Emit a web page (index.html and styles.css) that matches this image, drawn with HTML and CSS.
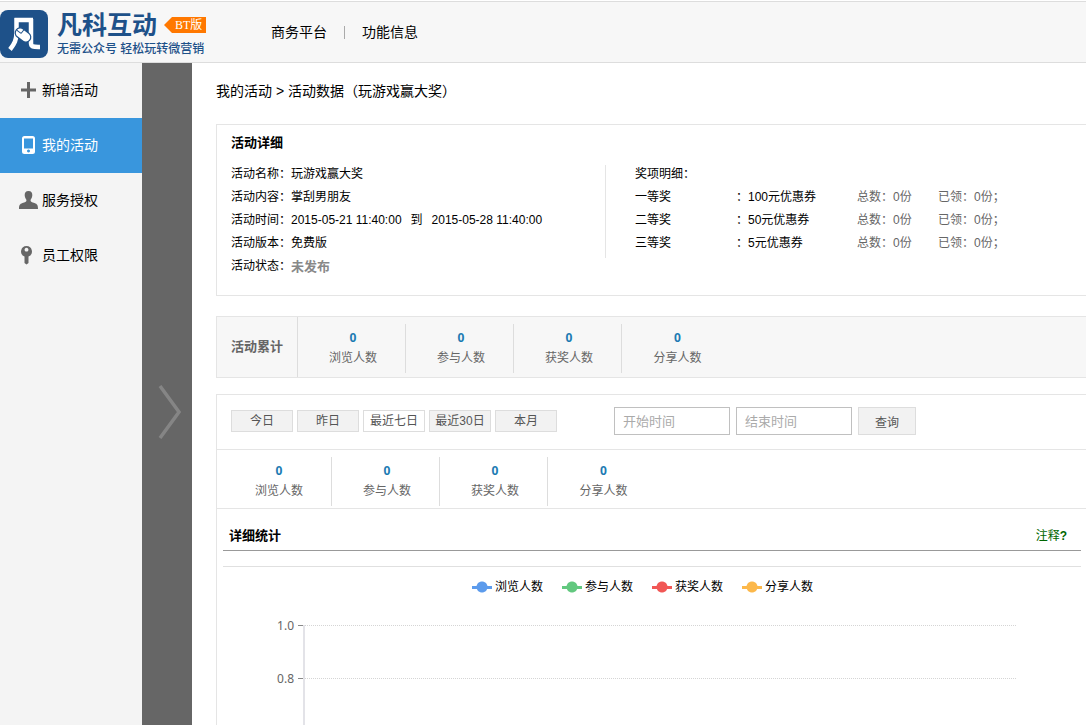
FILE: index.html
```html
<!DOCTYPE html>
<html lang="zh-CN">
<head>
<meta charset="utf-8">
<title>凡科互动 - 活动数据</title>
<link rel="stylesheet" href="styles.css">
</head>
<body>
<header class="topbar">
  <a class="brand" href="#">
    <svg class="brand-mark" viewBox="0 0 48 48" aria-hidden="true">
      <rect width="48" height="48" rx="8" fill="#1e5189"/>
      <path d="M16.500 8 V22 C16.500 30 14.500 34 10 39.500 M14.500 10 H33 M31 9 V33 C31 36.500 32.500 37.200 40 37" fill="none" stroke="#fff" stroke-width="4.500"/>
      <g transform="rotate(38 23 25)">
        <rect x="14.500" y="20" width="17" height="10" rx="5" fill="#fff" stroke="#1e5189" stroke-width="1.200"/>
        <path d="M20.500 20 V25 M15 25 H20.500" fill="none" stroke="#1e5189" stroke-width="1"/>
      </g>
    </svg>
    <span class="brand-text">
      <span class="brand-line"><strong class="brand-name">凡科互动</strong><span class="brand-tag">BT版</span></span>
      <span class="brand-slogan">无需公众号 轻松玩转微营销</span>
    </span>
  </a>
  <nav class="topnav">
    <a href="#">商务平台</a>
    <span class="topnav-sep"></span>
    <a href="#">功能信息</a>
  </nav>
</header>

<div class="shell">
  <nav class="sidebar">
    <a class="side-item" href="#">
      <svg class="side-icon" viewBox="0 0 20 20" aria-hidden="true"><path d="M2 10 H17 M9.500 2 V18" stroke="#666" stroke-width="3" fill="none"/></svg>新增活动</a>
    <a class="side-item is-active" href="#" aria-current="page">
      <svg class="side-icon" viewBox="0 0 20 20" aria-hidden="true"><path fill="#fff" fill-rule="evenodd" d="M5.500 1 H13.500 Q16 1 16 3.500 V16.500 Q16 19 13.500 19 H5.500 Q3 19 3 16.500 V3.500 Q3 1 5.500 1 Z M5 3.500 V13.500 H14 V3.500 Z M9.500 14.500 a1.500 1.500 0 1 0 .01 0 Z"/></svg>我的活动</a>
    <a class="side-item" href="#">
      <svg class="side-icon" viewBox="0 0 20 20" aria-hidden="true"><path fill="#666" d="M9.500 1 C12.300 1 13.500 3 13.300 5.500 C13.100 8 12 9 11.500 10 C11.500 12 13 12.300 15.500 13 C18.300 14 19 15.500 19 19 H0 C0 15.500 .7 14 3.500 13 C6 12.300 7.500 12 7.500 10 C7 9 5.900 8 5.700 5.500 C5.500 3 6.700 1 9.500 1 Z"/></svg>服务授权</a>
    <a class="side-item" href="#">
      <svg class="side-icon" viewBox="0 0 20 20" aria-hidden="true"><path fill="#666" fill-rule="evenodd" d="M7.500 1 a5.500 5.500 0 0 1 2 10.600 V18 L7.500 19.500 L5.500 18 V11.600 A5.500 5.500 0 0 1 7.500 1 Z M7.500 2.800 a1.900 1.900 0 1 0 .01 0 Z"/></svg>员工权限</a>
  </nav>
  <button class="expander" type="button" aria-label="展开">
    <svg class="expander-icon" viewBox="0 0 24 54" aria-hidden="true"><path d="M2 1 L21 27 L2 53" fill="none" stroke="#858585" stroke-width="3.500"/></svg>
  </button>

  <main class="main">
    <div class="crumb"><a href="#">我的活动</a> &gt; 活动数据（玩游戏赢大奖）</div>

    <section class="detail">
      <h2 class="detail-title">活动详细</h2>
      <div class="detail-cols">
        <dl class="facts">
          <div class="fact"><dt>活动名称：</dt><dd>玩游戏赢大奖</dd></div>
          <div class="fact"><dt>活动内容：</dt><dd>掌刮男朋友</dd></div>
          <div class="fact"><dt>活动时间：</dt><dd class="period"><time>2015-05-21 11:40:00</time><span>到</span><time>2015-05-28 11:40:00</time></dd></div>
          <div class="fact"><dt>活动版本：</dt><dd>免费版</dd></div>
          <div class="fact"><dt>活动状态：</dt><dd class="unpublished">未发布</dd></div>
        </dl>
        <div class="prize-col">
          <table class="prizes">
            <caption>奖项明细：</caption>
            <tbody>
              <tr><th scope="row">一等奖</th><td class="prize">：100元优惠券</td><td class="total">总数：0份</td><td class="taken">已领：0份；</td></tr>
              <tr><th scope="row">二等奖</th><td class="prize">：50元优惠券</td><td class="total">总数：0份</td><td class="taken">已领：0份；</td></tr>
              <tr><th scope="row">三等奖</th><td class="prize">：5元优惠券</td><td class="total">总数：0份</td><td class="taken">已领：0份；</td></tr>
            </tbody>
          </table>
        </div>
      </div>
    </section>

    <section class="totals">
      <h2 class="totals-title">活动累计</h2>
      <ul class="stats">
        <li class="stat"><b>0</b>浏览人数</li>
        <li class="stat"><b>0</b>参与人数</li>
        <li class="stat"><b>0</b>获奖人数</li>
        <li class="stat"><b>0</b>分享人数</li>
      </ul>
    </section>

    <section class="report">
      <form class="filter">
        <div class="ranges">
          <button class="range" type="button">今日</button>
          <button class="range" type="button">昨日</button>
          <button class="range is-on" type="button">最近七日</button>
          <button class="range" type="button">最近30日</button>
          <button class="range" type="button">本月</button>
        </div>
        <div class="dates">
          <input class="date" type="text" placeholder="开始时间" aria-label="开始时间">
          <input class="date" type="text" placeholder="结束时间" aria-label="结束时间">
          <button class="query" type="button">查询</button>
        </div>
      </form>
      <ul class="stats stats-range">
        <li class="stat"><b>0</b>浏览人数</li>
        <li class="stat"><b>0</b>参与人数</li>
        <li class="stat"><b>0</b>获奖人数</li>
        <li class="stat"><b>0</b>分享人数</li>
      </ul>
      <div class="chart-panel">
        <div class="chart-head">
          <h2 class="chart-title">详细统计</h2>
          <a class="note" href="#">注释<b>?</b></a>
        </div>
        <div class="chart">
          <ul class="legend">
            <li class="series blue">浏览人数</li>
            <li class="series green">参与人数</li>
            <li class="series red">获奖人数</li>
            <li class="series amber">分享人数</li>
          </ul>
          <div class="plot">
            <div class="band"><span class="tick">1.0</span><span class="band-area"></span></div>
            <div class="band"><span class="tick">0.8</span><span class="band-area"></span></div>
          </div>
        </div>
      </div>
    </section>
  </main>
</div>
</body>
</html>
```
FILE: styles.css
```css
* { box-sizing: border-box; }

body {
  margin: 0;
  min-height: 100vh;
  display: flex;
  flex-direction: column;
  background: #fff;
  color: #000;
  font: 12px/20px "Liberation Sans", "Noto Sans CJK SC", sans-serif;
  overflow-x: hidden;
}

a { color: inherit; text-decoration: none; }
ul, dl, dd, h2 { margin: 0; padding: 0; list-style: none; }
button, input { font-family: inherit; margin: 0; padding: 0; border-radius: 0; }
button { cursor: pointer; }

/* Top bar */
.topbar {
  display: flex;
  align-items: center;
  gap: 65px;
  margin-top: 1px;
  height: 62px;
  background: #f7f7f7;
  border-top: 1px solid #ddd;
  border-bottom: 1px solid #ddd;
}
.brand { display: flex; align-items: center; gap: 9px; color: #1e5189; padding-top: 4px; }
.brand-mark { width: 48px; height: 48px; }
.brand-text { display: flex; flex-direction: column; width: 149px; }
.brand-line { display: flex; align-items: center; gap: 7px; }
.brand-name { font-size: 25px; line-height: 29px; font-weight: 700; }
.brand-tag {
  flex: 1;
  height: 16px;
  padding-left: 11px;
  background: #ff7800;
  clip-path: polygon(0 50%, 8px 0, 100% 0, 100% 100%, 8px 100%);
  color: #fff;
  font: 12px/16px "Liberation Serif", "Noto Sans CJK SC", serif;
  white-space: nowrap;
}
.brand-slogan { line-height: 18px; font-weight: 500; white-space: nowrap; }
.topnav { display: flex; align-items: center; gap: 17px; font-size: 14px; }
.topnav-sep { width: 1px; height: 13px; background: #aaa; }

/* Side navigation */
.shell { flex: 1; display: flex; }
.sidebar { flex: none; width: 142px; background: #f4f4f4; }
.side-item {
  display: flex;
  align-items: center;
  gap: 3px;
  height: 55px;
  padding: 0 0 1px 19px;
  font-size: 14px;
}
.side-item.is-active { background: #3996dd; color: #fff; }
.side-icon { width: 20px; height: 20px; }
.expander {
  flex: none;
  width: 50px;
  border: 0;
  background: #666;
  display: flex;
  align-items: center;
  justify-content: center;
  padding: 30px 0 0 5px;
}
.expander-icon { width: 24px; height: 54px; }

/* Content */
.main {
  flex: 1;
  min-width: 0;
  display: flex;
  flex-direction: column;
  padding: 18px 0 0 24px;
}
.crumb { font-size: 14px; margin-bottom: 23px; }

.detail {
  border: 1px solid #e5e5e5;
  border-right: 0;
  padding: 8px 14px 17px;
  margin-bottom: 20px;
}
.detail-title { font-size: 13px; line-height: 20px; margin-bottom: 10px; }
.detail-cols { display: flex; align-items: flex-start; line-height: 23px; }
.facts { flex: none; width: 374px; }
.fact { display: flex; height: 23px; }
.period { display: flex; gap: 9px; }
.unpublished { color: #888; font-size: 13px; font-weight: 700; }
.prize-col {
  height: 95px;
  padding-left: 30px;
  background: linear-gradient(#e5e5e5, #e5e5e5) left bottom / 1px 93px no-repeat;
}
.prizes { border-collapse: collapse; white-space: nowrap; }
.prizes caption { text-align: left; }
.prizes th, .prizes td { padding: 0; text-align: left; font-weight: 400; }
.prizes th { width: 101px; }
.prizes .prize { width: 121px; }
.prizes .total { width: 81px; color: #666; }
.prizes .taken { color: #666; }

.totals {
  display: flex;
  height: 62px;
  background: #f7f7f7;
  border: 1px solid #e5e5e5;
  border-right: 0;
  margin-bottom: 16px;
}
.totals-title {
  width: 81px;
  border-right: 1px solid #ddd;
  color: #666;
  font-size: 13px;
  line-height: 60px;
  text-align: center;
}
.stats { display: flex; padding-top: 7px; color: #666; }
.stat {
  width: 108px;
  height: 49px;
  padding: 4px 0 0 3px;
  border-right: 1px solid #ddd;
  text-align: center;
}
.stat:last-child { border-right: 0; }
.stat b {
  display: block;
  color: #1d7bb3;
  font-family: "Noto Sans", sans-serif;
}

.report {
  flex: 1;
  display: flex;
  flex-direction: column;
  border: 1px solid #e5e5e5;
  border-width: 1px 0 0 1px;
}
.filter {
  display: flex;
  align-items: center;
  gap: 57px;
  height: 55px;
  padding: 0 14px 2px;
  border-bottom: 1px solid #e5e5e5;
}
.ranges { display: flex; gap: 4px; }
.range, .query { border: 1px solid #ddd; background: #f2f2f2; color: #555; font-size: 12px; }
.range { width: 62px; height: 22px; line-height: 20px; }
.range.is-on { background: #fff; }
.dates { display: flex; gap: 6px; }
.date {
  width: 116px;
  height: 28px;
  padding: 0 8px;
  border: 1px solid #c0c0c0;
  background: #fff;
  font-size: 13px;
}
.date::placeholder { color: #aaa; opacity: 1; }
.query { width: 58px; height: 28px; }
.stats-range { padding: 7px 0 2px 7px; border-bottom: 1px solid #e5e5e5; }

/* Chart */
.chart-panel { flex: 1; display: flex; flex-direction: column; padding: 0 5px 0 6px; }
.chart-head {
  display: flex;
  align-items: flex-end;
  justify-content: space-between;
  height: 42px;
  padding: 0 14px 4px 6px;
  border-bottom: 1px solid #999;
}
.chart-title { font-size: 13px; line-height: 20px; }
.note { color: #060; }
.chart {
  flex: 1;
  display: flex;
  flex-direction: column;
  margin-top: 15px;
  border-top: 1px solid #e0e0e0;
  padding: 10px 64px 0 0;
}
.legend { display: flex; justify-content: center; gap: 19px; padding-left: 45px; margin-bottom: 28px; }
.series { display: flex; align-items: center; gap: 3px; white-space: nowrap; }
.series::before {
  content: "";
  width: 20px;
  height: 12px;
  background:
    radial-gradient(circle at center, currentColor 5px, transparent 6px),
    linear-gradient(currentColor, currentColor) center / 20px 3px no-repeat;
}
.blue::before { color: #5c9bec; }
.green::before { color: #62c87f; }
.red::before { color: #f15755; }
.amber::before { color: #fcb84b; }

.plot { flex: 1; display: flex; flex-direction: column; }
.band { display: flex; min-height: 53px; }
.band:last-child { flex: 1; }
.tick {
  width: 80px;
  height: 1px;
  padding-right: 9px;
  color: #666;
  font: 12px/1px "Noto Sans", sans-serif;
  text-align: right;
  background: linear-gradient(#888, #888) right / 5px 1px no-repeat;
}
.band-area {
  flex: 1;
  border-left: 2px solid #e3e3e8;
  background: repeating-linear-gradient(90deg, #d5d5d5 0 1px, transparent 1px 2px) top / 100% 1px no-repeat;
}
```
